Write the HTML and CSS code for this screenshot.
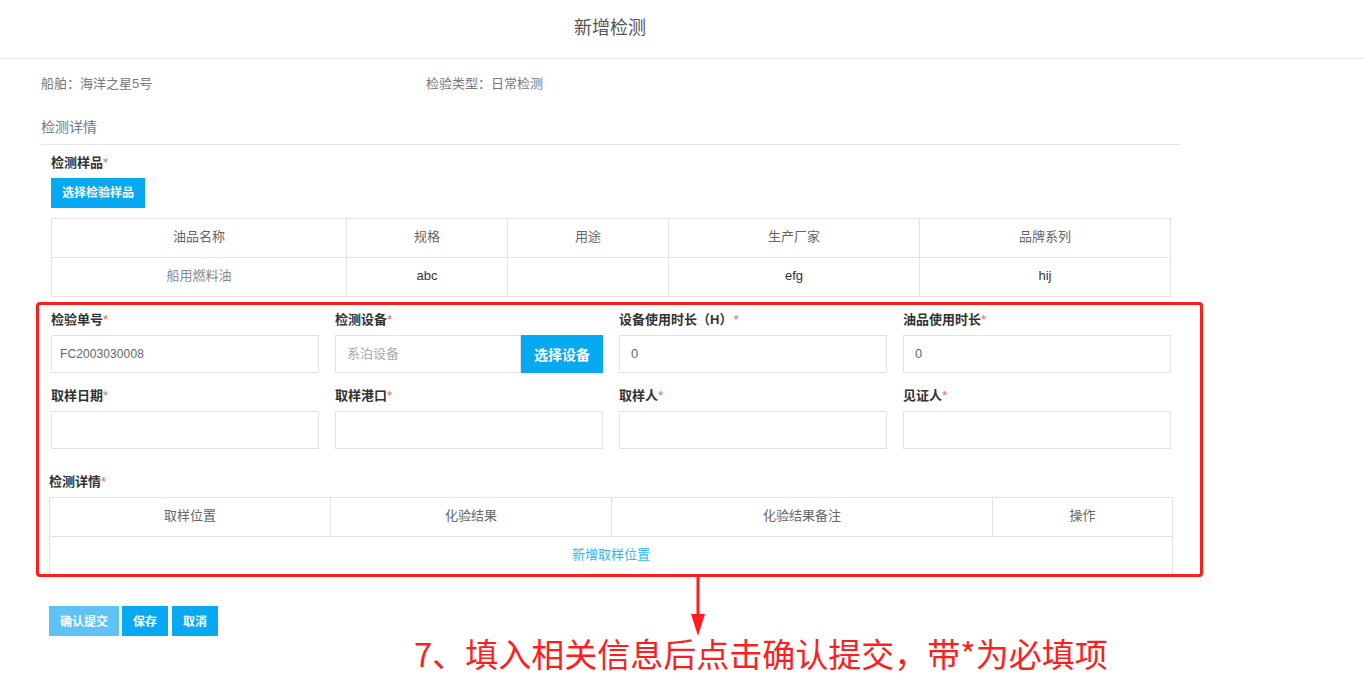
FILE: index.html
```html
<!DOCTYPE html>
<html lang="zh-CN">
<head>
<meta charset="utf-8">
<title>新增检测</title>
<link rel="stylesheet" href="styles.css">
</head>
<body>
<div class="page">
  <header class="header">新增检测</header>
  <main class="content">
    <div class="info">
      <div class="info-item">船舶：海洋之星5号</div>
      <div class="info-item">检验类型：日常检测</div>
    </div>
    <div class="section-title">检测详情</div>
    <div class="section">
      <div class="label">检测样品<span class="req">*</span></div>
      <button class="btn btn-primary btn-sample">选择检验样品</button>
      <table class="grid-table sample-table">
        <colgroup>
          <col style="width:295px"><col style="width:161px"><col style="width:161px"><col style="width:251px"><col>
        </colgroup>
        <tr class="head"><td>油品名称</td><td>规格</td><td>用途</td><td>生产厂家</td><td>品牌系列</td></tr>
        <tr><td class="muted">船用燃料油</td><td class="dark">abc</td><td></td><td class="dark">efg</td><td class="dark">hij</td></tr>
      </table>

      <div class="form-grid">
        <div class="field">
          <div class="label">检验单号<span class="req">*</span></div>
          <div class="input code">FC2003030008</div>
        </div>
        <div class="field">
          <div class="label">检测设备<span class="req">*</span></div>
          <div class="input-group">
            <div class="input placeholder">系泊设备</div>
            <button class="btn btn-primary btn-device">选择设备</button>
          </div>
        </div>
        <div class="field">
          <div class="label">设备使用时长（H）<span class="req sp">*</span></div>
          <div class="input">0</div>
        </div>
        <div class="field">
          <div class="label">油品使用时长<span class="req">*</span></div>
          <div class="input">0</div>
        </div>
        <div class="field">
          <div class="label">取样日期<span class="req">*</span></div>
          <div class="input"></div>
        </div>
        <div class="field">
          <div class="label">取样港口<span class="req">*</span></div>
          <div class="input"></div>
        </div>
        <div class="field">
          <div class="label">取样人<span class="req">*</span></div>
          <div class="input"></div>
        </div>
        <div class="field">
          <div class="label">见证人<span class="req">*</span></div>
          <div class="input"></div>
        </div>
      </div>

      <div class="detail">
        <div class="label">检测详情<span class="req">*</span></div>
        <table class="grid-table detail-table">
          <colgroup>
            <col style="width:281px"><col style="width:281px"><col style="width:381px"><col>
          </colgroup>
          <tr class="head"><td>取样位置</td><td>化验结果</td><td>化验结果备注</td><td>操作</td></tr>
          <tr><td colspan="4" class="link">新增取样位置</td></tr>
        </table>
      </div>
    </div>

    <div class="actions">
      <button class="btn btn-light">确认提交</button>
      <button class="btn btn-primary">保存</button>
      <button class="btn btn-primary">取消</button>
    </div>
  </main>

  <div class="note-box"></div>
  <svg class="note-arrow" width="20" height="64" viewBox="0 0 20 64">
    <rect x="8.5" y="0" width="3" height="44" fill="#ff1e1e"/>
    <polygon points="3,38 17,38 10,60" fill="#ff1e1e"/>
  </svg>
  <div class="note-text">7、填入相关信息后点击确认提交，带*为必填项</div>
</div>
</body>
</html>
```
FILE: styles.css
```css
* { box-sizing: border-box; }
html, body { margin: 0; padding: 0; background: #fff; }
body {
  font-family: "Liberation Sans", "Noto Sans CJK SC", sans-serif;
  font-size: 13px;
  color: #333;
}
.page { position: relative; width: 1364px; height: 686px; overflow: hidden; }

.header {
  height: 59px;
  border-bottom: 1px solid #e6e6e6;
  font-size: 18px;
  line-height: 57px;
  color: #555;
  padding-left: 574px;
}

.content { padding-left: 41px; }

.info {
  display: grid;
  grid-template-columns: 385px 300px;
  margin-top: 15px;
  line-height: 20px;
  color: #777;
  font-size: 13px;
}

.section-title {
  width: 1140px;
  margin-top: 23px;
  line-height: 20px;
  padding-bottom: 7px;
  border-bottom: 1px solid #e6e6e6;
  font-size: 14px;
  color: #777;
}

.section { padding-left: 10px; width: 1130px; }

.label {
  font-weight: bold;
  font-size: 13px;
  line-height: 20px;
  color: #333;
}
.req { color: #f0694f; font-weight: normal; }
.req.sp { margin-left: 1px; }

.section > .label { margin-top: 8px; }

.btn {
  border: 0;
  font-family: inherit;
  font-weight: bold;
  color: #fff;
  font-size: 12px;
  height: 30px;
  padding: 0 11px 2px;
  cursor: pointer;
}
.btn-primary { background: #06a9f2; }
.btn-light { background: #5ec3f4; }

.btn-sample { display: block; margin-top: 5px; width: 94px; padding: 0 0 3px; }

.grid-table {
  border-collapse: collapse;
  table-layout: fixed;
  width: 1120px;
  margin-top: 10px;
}
.grid-table td {
  border: 1px solid #e3e3e3;
  height: 39px;
  text-align: center;
  color: #666;
  font-size: 13px;
  padding: 0 0 2px;
  line-height: 18px;
}
.grid-table td.muted { color: #888; }
.grid-table td.dark { color: #333; }

.form-grid {
  display: grid;
  grid-template-columns: repeat(4, 268px);
  column-gap: 16px;
  row-gap: 13px;
  margin-top: 13px;
  width: 1120px;
}
.field .label { height: 20px; }
.input {
  margin-top: 5px;
  height: 38px;
  border: 1px solid #e3e3e3;
  line-height: 36px;
  padding: 0 11px;
  color: #666;
  font-size: 13px;
}
.input.code { padding-left: 8px; font-size: 12px; letter-spacing: 0.1px; }
.input.placeholder { color: #aaa; flex: 1; margin-top: 0; }
.input-group { display: flex; margin-top: 5px; height: 38px; }
.btn-device { height: 38px; width: 82px; padding: 0; font-size: 14px; }

.detail { margin-left: -2px; margin-top: 23px; }
.detail-table { width: 1124px; margin-top: 5px; }
.grid-table td.link { color: #2db7f5; }

.actions {
  display: flex;
  margin-top: 30px;
  margin-left: 8px;
}
.actions .btn:nth-child(2) { margin-left: 3px; }
.actions .btn:nth-child(3) { margin-left: 4px; }

.note-box {
  position: absolute;
  left: 36px;
  top: 302px;
  width: 1167px;
  height: 275px;
  border: 3px solid #ff1e1e;
  border-radius: 4px;
}
.note-arrow {
  position: absolute;
  left: 688px;
  top: 576px;
}
.note-text {
  position: absolute;
  left: 414px;
  top: 632px;
  font-family: "Noto Sans CJK SC", sans-serif;
  font-size: 33px;
  line-height: 42px;
  color: #ff1e1e;
  white-space: nowrap;
}
```
